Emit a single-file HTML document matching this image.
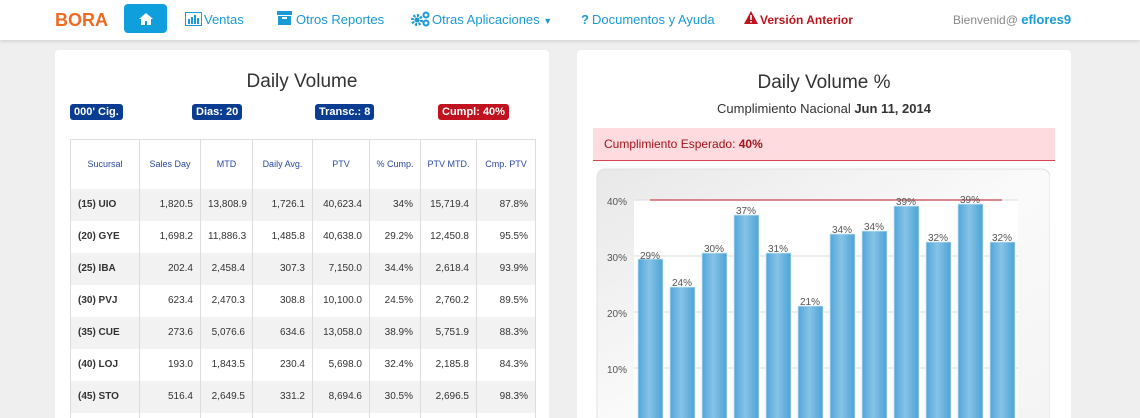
<!DOCTYPE html>
<html><head><meta charset="utf-8"><style>
*{margin:0;padding:0;box-sizing:border-box}
html,body{width:1140px;height:418px;overflow:hidden}
body{background:#efefef;font-family:"Liberation Sans",Arial,sans-serif;position:relative}
.nav{position:absolute;left:0;top:0;width:1140px;height:40px;background:#fff;box-shadow:0 1px 4px rgba(0,0,0,.15)}
.a{position:absolute;font-size:13px;color:#1a9ad6;top:12px;white-space:nowrap}
.panel{position:absolute;background:#fff;border-radius:4px 4px 0 0}
.badge{position:absolute;top:104px;height:16px;color:#fff;font-size:11px;font-weight:bold;padding:2px 4px;border-radius:3px;background:#0a3d91;line-height:12px;white-space:nowrap}
table{position:absolute;left:70px;top:139px;border-collapse:collapse;font-size:10px;border:1px solid #ddd;border-bottom:none;width:465px;table-layout:fixed}
td,th{border-left:1px solid #ddd;padding:0 7px;text-align:right;color:#333;height:32px;white-space:nowrap;overflow:hidden}
th{font-weight:normal;color:#2a4aa0;text-align:center;height:49px;font-size:9px;padding:0 2px}
td:first-child{text-align:left;font-weight:bold}
tr:nth-child(even) td{background:#f2f2f2}
</style></head><body>
<div class="nav">
<div style="position:absolute;left:55px;top:10px;font-size:18px;font-weight:bold;color:#f06a22">BORA</div>
<div style="position:absolute;left:124px;top:4px;width:43px;height:29px;background:#0e9fdc;border-radius:4px">
<svg width="14" height="12" viewBox="0 0 14 12" style="position:absolute;left:15px;top:9px"><path d="M7 0L0 6h2v6h4V8h2v4h4V6h2z" fill="#fff"/></svg></div>
<svg width="17" height="14" style="position:absolute;left:185px;top:12px"><rect x="0.5" y="0.5" width="16" height="13" fill="none" stroke="#1a9ad6"/><rect x="3" y="7" width="2" height="5" fill="#1a9ad6"/><rect x="6" y="5" width="2" height="7" fill="#1a9ad6"/><rect x="9" y="3" width="2" height="9" fill="#1a9ad6"/><rect x="12" y="6" width="2" height="6" fill="#1a9ad6"/></svg>
<div class="a" style="left:204px">Ventas</div>
<svg width="15" height="14" style="position:absolute;left:277px;top:11px"><rect x="0" y="0" width="15" height="4" fill="#1a9ad6"/><rect x="1" y="5" width="13" height="9" fill="#1a9ad6"/><rect x="5" y="6" width="5" height="2" fill="#fff"/></svg>
<div class="a" style="left:296px">Otros Reportes</div>
<svg width="20" height="16" style="position:absolute;left:411px;top:11px"><circle cx="6" cy="9" r="4.5" fill="none" stroke="#1a9ad6" stroke-width="3" stroke-dasharray="2 1.5"/><circle cx="6" cy="9" r="2.5" fill="#1a9ad6"/><circle cx="15" cy="4" r="2.5" fill="none" stroke="#1a9ad6" stroke-width="2"/><circle cx="15" cy="12" r="2.5" fill="none" stroke="#1a9ad6" stroke-width="2"/></svg>
<div class="a" style="left:432px">Otras Aplicaciones <span style="font-size:9px">▼</span></div>
<div class="a" style="left:581px;font-weight:bold">?</div>
<div class="a" style="left:592px">Documentos y Ayuda</div>
<svg width="14" height="13" style="position:absolute;left:744px;top:11px"><path d="M7 0L14 13H0z" fill="#c0141d"/><rect x="6.2" y="4" width="1.6" height="5" fill="#fff"/><rect x="6.2" y="10" width="1.6" height="1.6" fill="#fff"/></svg>
<div class="a" style="left:760px;color:#c0141d;font-weight:bold;font-size:12px;top:13px">Versión Anterior</div>
<div class="a" style="left:953px;color:#888;font-size:12px">Bienvenid@ <b style="color:#1a9ad6;font-size:13px">eflores9</b></div>
</div>

<div class="panel" style="left:55px;top:50px;width:494px;height:368px">
<div style="position:absolute;left:0;width:494px;top:21px;text-align:center;font-size:19px;color:#333">Daily Volume</div>
</div>
<div class="badge" style="left:70px">000' Cig.</div>
<div class="badge" style="left:192px">Dias: 20</div>
<div class="badge" style="left:315px">Transc.: 8</div>
<div class="badge" style="left:438px;background:#c1121f">Cumpl: 40%</div>
<table>
<colgroup><col style="width:69px"><col style="width:61px"><col style="width:52px"><col style="width:60px"><col style="width:57px"><col style="width:51px"><col style="width:56px"><col style="width:59px"></colgroup>
<tr><th>Sucursal</th><th>Sales Day</th><th>MTD</th><th>Daily Avg.</th><th>PTV</th><th>% Cump.</th><th>PTV MTD.</th><th>Cmp. PTV</th></tr>
<tr><td>(15) UIO</td><td>1,820.5</td><td>13,808.9</td><td>1,726.1</td><td>40,623.4</td><td>34%</td><td>15,719.4</td><td>87.8%</td></tr>
<tr><td>(20) GYE</td><td>1,698.2</td><td>11,886.3</td><td>1,485.8</td><td>40,638.0</td><td>29.2%</td><td>12,450.8</td><td>95.5%</td></tr>
<tr><td>(25) IBA</td><td>202.4</td><td>2,458.4</td><td>307.3</td><td>7,150.0</td><td>34.4%</td><td>2,618.4</td><td>93.9%</td></tr>
<tr><td>(30) PVJ</td><td>623.4</td><td>2,470.3</td><td>308.8</td><td>10,100.0</td><td>24.5%</td><td>2,760.2</td><td>89.5%</td></tr>
<tr><td>(35) CUE</td><td>273.6</td><td>5,076.6</td><td>634.6</td><td>13,058.0</td><td>38.9%</td><td>5,751.9</td><td>88.3%</td></tr>
<tr><td>(40) LOJ</td><td>193.0</td><td>1,843.5</td><td>230.4</td><td>5,698.0</td><td>32.4%</td><td>2,185.8</td><td>84.3%</td></tr>
<tr><td>(45) STO</td><td>516.4</td><td>2,649.5</td><td>331.2</td><td>8,694.6</td><td>30.5%</td><td>2,696.5</td><td>98.3%</td></tr>
<tr><td style="height:6px"></td><td style="height:6px"></td><td style="height:6px"></td><td style="height:6px"></td><td style="height:6px"></td><td style="height:6px"></td><td style="height:6px"></td><td style="height:6px"></td></tr>
</table>

<div class="panel" style="left:577px;top:50px;width:494px;height:368px">
<div style="position:absolute;left:0;width:494px;top:22px;text-align:center;font-size:19px;color:#333">Daily Volume %</div>
<div style="position:absolute;left:0;width:494px;top:51px;text-align:center;font-size:13px;color:#333">Cumplimiento Nacional <b>Jun 11, 2014</b></div>
<div style="position:absolute;left:16px;top:78px;width:462px;height:33px;background:#fddbde;border-bottom:1px solid #d9434e;font-size:12px;color:#a5141d;padding:9px 11px">Cumplimiento Esperado: <b>40%</b></div>
</div>
<svg width="460" height="258" style="position:absolute;left:590px;top:160px">
<defs><linearGradient id="bg" x1="0" y1="0" x2="1" y2="1"><stop offset="0" stop-color="#e8e8e8"/><stop offset=".5" stop-color="#fafafa"/><stop offset="1" stop-color="#f4f4f4"/></linearGradient>
<linearGradient id="b" x1="0" x2="1"><stop offset="0" stop-color="#4fa6d8"/><stop offset=".45" stop-color="#86c3e6"/><stop offset="1" stop-color="#4aa2d6"/></linearGradient></defs>
<rect x="7" y="9" width="453" height="260" rx="8" fill="url(#bg)" stroke="#e0e0e0"/>
<rect x="44" y="40" width="384" height="230" fill="#fff"/>
<g stroke="#ddd"><line x1="44" y1="40" x2="428" y2="40"/><line x1="44" y1="96" x2="428" y2="96"/><line x1="44" y1="152" x2="428" y2="152"/><line x1="44" y1="208" x2="428" y2="208"/></g>
<g font-size="10" fill="#555" font-family="Liberation Sans"><text x="17" y="45">40%</text><text x="17" y="101">30%</text><text x="17" y="157">20%</text><text x="17" y="213">10%</text></g>
<g fill="url(#b)" stroke="#cfe6f4" stroke-width=".8">
<rect x="48" y="99" width="25" height="170"/><rect x="80" y="127" width="25" height="150"/><rect x="112" y="93" width="25" height="180"/><rect x="144" y="55" width="25" height="220"/><rect x="176" y="93" width="25" height="180"/><rect x="208" y="146" width="25" height="130"/><rect x="240" y="74" width="25" height="200"/><rect x="272" y="71" width="25" height="200"/><rect x="304" y="46" width="25" height="230"/><rect x="336" y="82" width="25" height="200"/><rect x="368" y="44" width="25" height="230"/><rect x="400" y="82" width="25" height="200"/>
</g>
<line x1="60" y1="40" x2="412" y2="40" stroke="#d0606a" stroke-width="1.5"/>
<g font-size="10" fill="#555" text-anchor="middle" font-family="Liberation Sans">
<text x="60" y="99">29%</text><text x="92" y="126">24%</text><text x="124" y="92">30%</text><text x="156" y="54">37%</text><text x="188" y="92">31%</text><text x="220" y="145">21%</text><text x="252" y="73">34%</text><text x="284" y="70">34%</text><text x="316" y="45">39%</text><text x="348" y="81">32%</text><text x="380" y="43">39%</text><text x="412" y="81">32%</text></g>
</svg>
</body></html>
